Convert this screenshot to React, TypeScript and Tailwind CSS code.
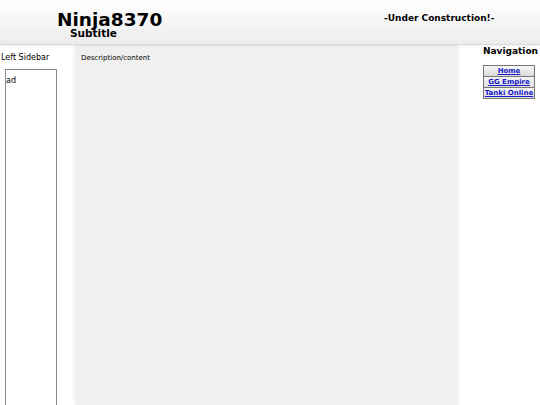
const font = { fontFamily: '"DejaVu Sans", Verdana, sans-serif' }

function NavLink({ label, first }: { label: string; first?: boolean }) {
  return (
    <div
      className={`bg-gradient-to-b from-[#f6f6f6] to-[#dcdcdc] text-center text-[7px] leading-[10px] whitespace-nowrap ${
        first ? '' : 'border-t border-[#777]'
      }`}
    >
      <a href="#" className="font-bold text-[#1a1acc] underline">
        {label}
      </a>
    </div>
  )
}

export default function App() {
  return (
    <div className="h-[405px] w-[540px] flex flex-col bg-white text-black overflow-hidden" style={font}>
      <header className="h-[45px] shrink-0 flex bg-gradient-to-b from-white to-[#ececec] border-b border-[#dcdcdc] shadow-[0_1px_2px_rgba(0,0,0,0.08)] relative z-10">
        <div className="w-[384px] pl-[57px] pt-[11px]">
          <div className="text-[18.5px] font-bold leading-[17px]">Ninja8370</div>
          <div className="text-[10.5px] font-bold leading-[10px] ml-[13px]">Subtitle</div>
        </div>
        <div className="pt-[13px] text-[9px] font-bold leading-[11px]">-Under Construction!-</div>
      </header>
      <main className="flex flex-1 min-h-0">
        <aside className="w-[75px] shrink-0 pt-[8px]">
          <div className="text-[8px] leading-[10px] pl-[1px]">Left Sidebar</div>
          <div className="ml-[5px] mt-[6px] w-[52px] h-[400px] border border-[#8a8a8a] text-[8px] leading-[10px] pt-[6px]">
            ad
          </div>
        </aside>
        <section className="w-[383px] shrink-0 bg-[#f0f0f0] shadow-[0_0_5px_rgba(0,0,0,0.07)] pt-[9px] pl-[6px]">
          <div className="text-[7px] leading-[9px]">Description/content</div>
        </section>
        <nav className="flex-1 flex flex-col items-end pr-[2px]">
          <div className="text-[9px] font-bold leading-[12px] whitespace-nowrap">Navigation</div>
          <div className="mt-[8px] mr-[3px] w-[52px] flex flex-col border border-[#777]">
            <NavLink label="Home" first />
            <NavLink label="GG Empire" />
            <NavLink label="Tanki Online" />
          </div>
        </nav>
      </main>
    </div>
  )
}
